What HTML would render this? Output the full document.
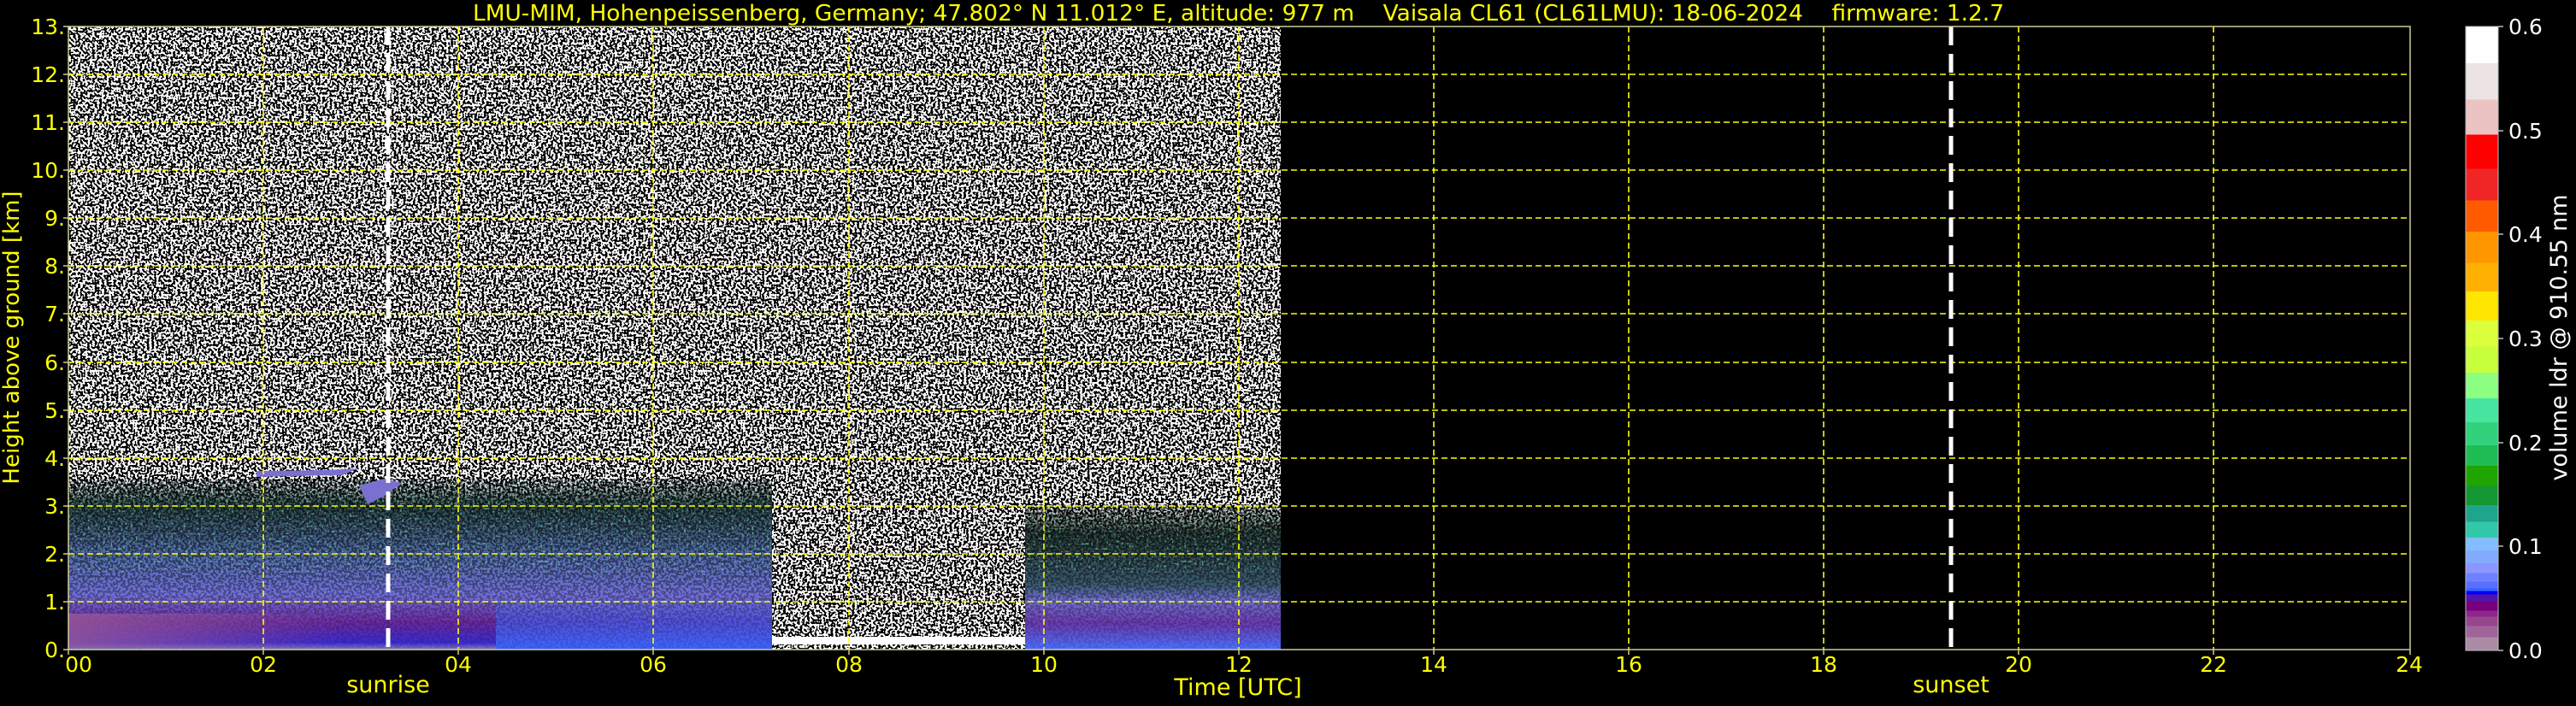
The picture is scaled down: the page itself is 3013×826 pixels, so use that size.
<!DOCTYPE html>
<html><head><meta charset="utf-8"><style>
html,body{margin:0;padding:0;background:#000;}
svg{display:block;font-family:"DejaVu Sans","Liberation Sans",sans-serif;}
</style></head><body>
<svg width="3013" height="826" viewBox="0 0 3013 826" xmlns="http://www.w3.org/2000/svg">
<defs>
<filter id="bw" filterUnits="userSpaceOnUse" x="0" y="0" width="3013" height="826">
<feTurbulence type="fractalNoise" baseFrequency="0.36" numOctaves="1" seed="3" result="n"/>
<feColorMatrix in="n" type="matrix" values="1 0 0 0 0  1 0 0 0 0  1 0 0 0 0  0 0 0 0 1" result="g"/>
<feComponentTransfer in="g" result="t"><feFuncR type="discrete" tableValues="0 1"/><feFuncG type="discrete" tableValues="0 1"/><feFuncB type="discrete" tableValues="0 1"/></feComponentTransfer>
<feComposite in="t" in2="SourceGraphic" operator="in"/>
</filter>
<filter id="dots" filterUnits="userSpaceOnUse" x="0" y="0" width="3013" height="826">
<feTurbulence type="fractalNoise" baseFrequency="0.34" numOctaves="1" seed="7" result="n"/>
<feColorMatrix in="n" type="matrix" values="0 0 0 0 0  0 0 0 0 0  0 0 0 0 0  1 0 0 0 0" result="g"/>
<feComponentTransfer in="g" result="t"><feFuncA type="discrete" tableValues="0 1"/></feComponentTransfer>
<feComposite in="t" in2="SourceGraphic" operator="in"/>
</filter>
<filter id="gdots" filterUnits="userSpaceOnUse" x="0" y="0" width="3013" height="826">
<feTurbulence type="fractalNoise" baseFrequency="0.34" numOctaves="1" seed="11" result="n"/>
<feColorMatrix in="n" type="matrix" values="0 0 0 0 0.2  0 0 0 0 0.8  0 0 0 0 0.5  0 1 0 0 0" result="g"/>
<feComponentTransfer in="g" result="t"><feFuncA type="discrete" tableValues="0 0 1"/></feComponentTransfer>
<feComposite in="t" in2="SourceGraphic" operator="in"/>
</filter>
<linearGradient id="gA" x1="0" y1="560" x2="0" y2="760" gradientUnits="userSpaceOnUse">
<stop offset="0" stop-color="#1c3a3a" stop-opacity="0"/><stop offset="0.16" stop-color="#1c3a3a" stop-opacity="0.9"/><stop offset="0.45" stop-color="#506aa8"/><stop offset="0.68" stop-color="#7070d8"/><stop offset="0.84" stop-color="#6a2aa0"/><stop offset="0.96" stop-color="#3a2ad0"/><stop offset="1" stop-color="#8a80c0"/>
</linearGradient>
<linearGradient id="gA2" x1="0" y1="560" x2="0" y2="760" gradientUnits="userSpaceOnUse">
<stop offset="0" stop-color="#1c3a3a" stop-opacity="0"/><stop offset="0.16" stop-color="#1c3a3a" stop-opacity="0.9"/><stop offset="0.45" stop-color="#506aa8"/><stop offset="0.68" stop-color="#7070d8"/><stop offset="0.84" stop-color="#5050d8"/><stop offset="1" stop-color="#3c64ff"/>
</linearGradient>
<linearGradient id="gC" x1="0" y1="590" x2="0" y2="760" gradientUnits="userSpaceOnUse">
<stop offset="0" stop-color="#1a2e2a" stop-opacity="0"/><stop offset="0.2" stop-color="#1a2e2a" stop-opacity="0.9"/><stop offset="0.55" stop-color="#3a5a70"/><stop offset="0.66" stop-color="#7070d0"/><stop offset="0.82" stop-color="#6a3ab0"/><stop offset="1" stop-color="#4a70ff"/>
</linearGradient>
<linearGradient id="mk" x1="0" y1="560" x2="0" y2="760" gradientUnits="userSpaceOnUse">
<stop offset="0" stop-color="#fff" stop-opacity="0.6"/><stop offset="0.5" stop-color="#fff" stop-opacity="0.45"/><stop offset="1" stop-color="#fff" stop-opacity="0.08"/>
</linearGradient>
<mask id="m1" maskUnits="userSpaceOnUse" x="0" y="0" width="3013" height="826"><rect x="0" y="560" width="3013" height="200" fill="url(#mk)"/></mask>
<linearGradient id="pb" x1="0" y1="0" x2="1" y2="0">
<stop offset="0" stop-color="#9a5a9a" stop-opacity="0.8"/><stop offset="1" stop-color="#9a5a9a" stop-opacity="0"/>
</linearGradient>
<linearGradient id="cb" x1="0" y1="0" x2="0" y2="1">
<stop offset="0" stop-color="#ffffff"/><stop offset=".059" stop-color="#ffffff"/>
<stop offset=".059" stop-color="#ece3e3"/><stop offset=".117" stop-color="#ece3e3"/>
<stop offset=".117" stop-color="#ecc3c3"/><stop offset=".173" stop-color="#ecc3c3"/>
<stop offset=".173" stop-color="#ff0000"/><stop offset=".228" stop-color="#ff0000"/>
<stop offset=".228" stop-color="#f02626"/><stop offset=".279" stop-color="#f02626"/>
<stop offset=".279" stop-color="#ff5a00"/><stop offset=".329" stop-color="#ff5a00"/>
<stop offset=".329" stop-color="#ff9600"/><stop offset=".379" stop-color="#ff9600"/>
<stop offset=".379" stop-color="#ffb000"/><stop offset=".425" stop-color="#ffb000"/>
<stop offset=".425" stop-color="#ffe600"/><stop offset=".471" stop-color="#ffe600"/>
<stop offset=".471" stop-color="#dcff3c"/><stop offset=".513" stop-color="#dcff3c"/>
<stop offset=".513" stop-color="#c8ff3c"/><stop offset=".555" stop-color="#c8ff3c"/>
<stop offset=".555" stop-color="#8cff82"/><stop offset=".596" stop-color="#8cff82"/>
<stop offset=".596" stop-color="#46e6a0"/><stop offset=".634" stop-color="#46e6a0"/>
<stop offset=".634" stop-color="#32d27d"/><stop offset=".671" stop-color="#32d27d"/>
<stop offset=".671" stop-color="#1ebe55"/><stop offset=".704" stop-color="#1ebe55"/>
<stop offset=".704" stop-color="#1ea500"/><stop offset=".736" stop-color="#1ea500"/>
<stop offset=".736" stop-color="#149632"/><stop offset=".767" stop-color="#149632"/>
<stop offset=".767" stop-color="#1ea58c"/><stop offset=".794" stop-color="#1ea58c"/>
<stop offset=".794" stop-color="#32c8aa"/><stop offset=".819" stop-color="#32c8aa"/>
<stop offset=".819" stop-color="#82beff"/><stop offset=".840" stop-color="#82beff"/>
<stop offset=".840" stop-color="#82aaff"/><stop offset=".860" stop-color="#82aaff"/>
<stop offset=".860" stop-color="#8c96ff"/><stop offset=".876" stop-color="#8c96ff"/>
<stop offset=".876" stop-color="#6e82ff"/><stop offset=".890" stop-color="#6e82ff"/>
<stop offset=".890" stop-color="#5a6eff"/><stop offset=".900" stop-color="#5a6eff"/>
<stop offset=".900" stop-color="#3c64ff"/><stop offset=".905" stop-color="#3c64ff"/>
<stop offset=".905" stop-color="#0000ff"/><stop offset=".910" stop-color="#0000ff"/>
<stop offset=".910" stop-color="#5014aa"/><stop offset=".921" stop-color="#5014aa"/>
<stop offset=".921" stop-color="#78007d"/><stop offset=".936" stop-color="#78007d"/>
<stop offset=".936" stop-color="#8c288c"/><stop offset=".946" stop-color="#8c288c"/>
<stop offset=".946" stop-color="#96468c"/><stop offset=".961" stop-color="#96468c"/>
<stop offset=".961" stop-color="#a0649b"/><stop offset=".979" stop-color="#a0649b"/>
<stop offset=".979" stop-color="#aa8ca5"/><stop offset="1" stop-color="#aa8ca5"/>
</linearGradient>
</defs>
<rect width="3013" height="826" fill="#000"/>
<rect x="80" y="31" width="1418" height="729" fill="#fff" filter="url(#bw)"/>
<rect x="80" y="560" width="500" height="200" fill="url(#gA)"/>
<rect x="580" y="560" width="323" height="200" fill="url(#gA2)"/>
<rect x="80" y="560" width="823" height="200" fill="#000" filter="url(#dots)" mask="url(#m1)"/>
<rect x="80" y="560" width="823" height="110" fill="#0f0" filter="url(#gdots)" opacity="0.5"/>
<rect x="80" y="718" width="320" height="40" fill="url(#pb)"/>
<rect x="1199" y="590" width="299" height="170" fill="url(#gC)"/>
<rect x="1199" y="590" width="299" height="170" fill="#000" filter="url(#dots)" mask="url(#m1)"/>
<rect x="1199" y="590" width="299" height="80" fill="#0f0" filter="url(#gdots)" opacity="0.5"/>
<rect x="903" y="745" width="296" height="9" fill="#fff"/>
<path d="M300 551 L380 550 L420 548 L400 556 L340 557 L300 558Z" fill="#7a70d0"/>
<path d="M420 568 L450 560 L470 565 L450 580 L430 590Z" fill="#7a70d0"/>
<g stroke="#ffff00" stroke-width="1.6" stroke-dasharray="7,4" fill="none">
<path d="M80 704H2819M80 648H2819M80 592H2819M80 536H2819M80 480H2819M80 424H2819M80 367H2819M80 311H2819M80 255H2819M80 199H2819M80 143H2819M80 87H2819"/>
<path d="M308 31V760M536 31V760M764 31V760M993 31V760M1221 31V760M1449 31V760M1677 31V760M1905 31V760M2133 31V760M2361 31V760M2589 31V760"/>
</g>
<g stroke="#fff" stroke-width="5" stroke-dasharray="22,10">
<line x1="454" y1="31" x2="454" y2="760"/>
<line x1="2282" y1="31" x2="2282" y2="760"/>
</g>
<rect x="80" y="31" width="2739" height="729" fill="none" stroke="#cccc99" stroke-width="1.5"/>
<g stroke="#cccc99" stroke-width="1.5">
<path d="M80 760v6M308 760v6M536 760v6M764 760v6M993 760v6M1221 760v6M1449 760v6M1677 760v6M1905 760v6M2133 760v6M2361 760v6M2589 760v6M2819 760v6"/>
<path d="M74 760h6M74 704h6M74 648h6M74 592h6M74 536h6M74 480h6M74 424h6M74 367h6M74 311h6M74 255h6M74 199h6M74 143h6M74 87h6M74 31h6"/>
</g>
<g fill="#ffff00" font-size="25" text-anchor="end">
<text x="76" y="769">0.</text><text x="76" y="713">1.</text><text x="76" y="657">2.</text><text x="76" y="601">3.</text><text x="76" y="545">4.</text><text x="76" y="489">5.</text><text x="76" y="433">6.</text><text x="76" y="376">7.</text><text x="76" y="320">8.</text><text x="76" y="264">9.</text><text x="76" y="208">10.</text><text x="76" y="152">11.</text><text x="76" y="96">12.</text><text x="76" y="40">13.</text>
</g>
<text transform="translate(22,395) rotate(-90)" fill="#ffff00" font-size="26" text-anchor="middle">Height above ground [km]</text>
<g fill="#ffff00" font-size="25" text-anchor="middle">
<text x="92" y="786">00</text><text x="308" y="786">02</text><text x="536" y="786">04</text><text x="764" y="786">06</text><text x="993" y="786">08</text><text x="1221" y="786">10</text><text x="1449" y="786">12</text><text x="1677" y="786">14</text><text x="1905" y="786">16</text><text x="2133" y="786">18</text><text x="2361" y="786">20</text><text x="2589" y="786">22</text><text x="2818" y="786">24</text>
<text x="454" y="810" font-size="27">sunrise</text>
<text x="2282" y="810" font-size="27">sunset</text>
<text x="1448" y="813" font-size="27">Time [UTC]</text>
</g>
<text x="553" y="24" fill="#ffff00" font-size="26" textLength="1791" lengthAdjust="spacingAndGlyphs" xml:space="preserve">LMU-MIM, Hohenpeissenberg, Germany; 47.802° N 11.012° E, altitude: 977 m    Vaisala CL61 (CL61LMU): 18-06-2024    firmware: 1.2.7</text>
<rect x="2884" y="31" width="38" height="730" fill="url(#cb)" stroke="#bbb" stroke-width="1"/>
<g stroke="#bbb" stroke-width="1.5"><path d="M2922 31h6M2922 153h6M2922 274h6M2922 396h6M2922 518h6M2922 639h6M2922 761h6"/></g>
<g fill="#fff" font-size="25">
<text x="2934" y="40">0.6</text><text x="2934" y="162">0.5</text><text x="2934" y="283">0.4</text><text x="2934" y="405">0.3</text><text x="2934" y="527">0.2</text><text x="2934" y="648">0.1</text><text x="2934" y="770">0.0</text>
</g>
<text transform="translate(3002,395) rotate(-90)" fill="#fff" font-size="27" text-anchor="middle">volume ldr @ 910.55 nm</text>
</svg>
</body></html>
